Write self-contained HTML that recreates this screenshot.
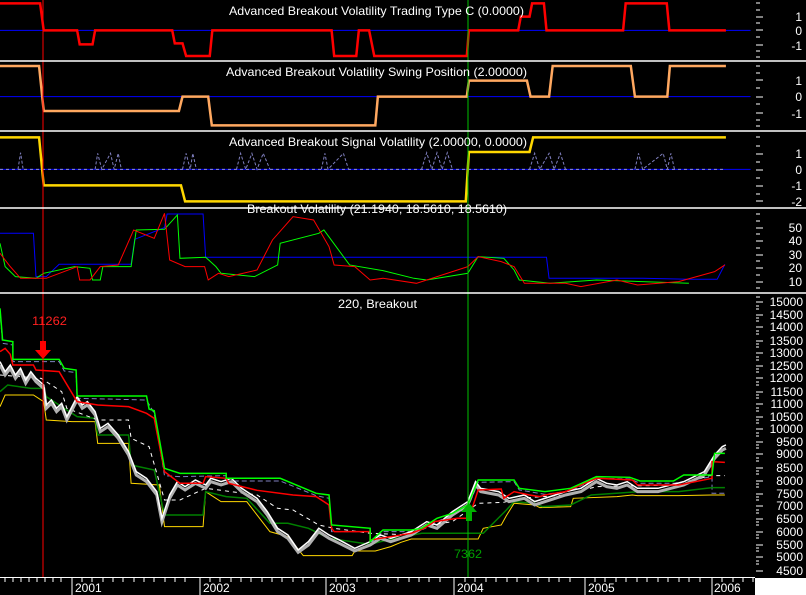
<!DOCTYPE html>
<html><head><meta charset="utf-8"><style>
html,body{margin:0;padding:0;background:#000;}
svg{display:block}
text{font-family:"Liberation Sans",sans-serif;fill:#fff;font-size:12px}
.r{text-anchor:end}
path,polyline{fill:none;vector-effect:non-scaling-stroke}
</style></head><body>
<svg width="806" height="595" viewBox="0 0 806 595" xmlns="http://www.w3.org/2000/svg">
<rect width="806" height="595" fill="#000"/>
<g transform="scale(0.5141,0.3333)">
 <path d="M0,91H1460" stroke="#0000ff" stroke-width="1"/>
 <path d="M0,290H1460" stroke="#0000ff" stroke-width="1"/>
 <path d="M0,508H1460" stroke="#0000ff" stroke-width="1"/>
 <path d="M0,508H1412" stroke="#9090d0" stroke-width="1" stroke-dasharray="3,3"/>
 <g stroke="#8080c0" stroke-width="1" stroke-dasharray="3,2">
  <polyline points="35,508 40,458 45,508"/>
  <polyline points="185,508 190,460 198,508 215,460 222,508 230,460 236,508"/>
  <polyline points="355,508 362,460 370,508 375,460 382,508"/>
  <polyline points="460,508 468,460 478,508 490,460 500,508 512,460 525,508"/>
  <polyline points="625,508 632,460 638,508 668,460 678,508"/>
  <polyline points="820,508 830,458 840,508 850,458 860,508 870,458 880,508"/>
  <polyline points="1030,508 1040,460 1050,508 1068,460 1078,508 1090,460 1100,508"/>
  <polyline points="1235,508 1242,460 1250,508 1290,460 1298,508 1305,460 1312,508"/>
 </g>
 <path d="M0,10H78L85,91H150L155,133H180L185,91H335L340,130H355L362,168H408L413,91H645L650,168H693L698,91H718L728,168H908L912,91H1008L1013,50H1030L1035,10H1058L1063,91H1212L1217,10H1297L1302,91H1412" stroke="#ff0000" stroke-width="2.5"/>
 <path d="M0,198H76L85,333H348L355,290H405L412,376H730L735,290H908L912,242H1025L1032,290H1068L1075,198H1227L1235,290H1298L1303,198H1412" stroke="#ffa860" stroke-width="2.5"/>
 <path d="M0,412H76L85,556H352L360,604H906L912,456H1030L1037,412H1412" stroke="#ffd700" stroke-width="2.5"/>
 <polyline stroke="#0000ff" stroke-width="1" points="0,700 65,700 70,830 90,830 115,793 255,793 262,718 320,683 325,642 395,642 400,772 1063,772 1068,835 1250,835 1340,838 1395,838 1410,793"/>
 <polyline stroke="#00ff00" stroke-width="1" points="0,730 10,800 30,830 70,835 85,820 145,800 175,805 180,840 195,840 200,800 255,800 265,690 320,688 345,645 350,775 400,772 420,800 430,820 495,830 540,795 545,730 620,700 630,690 680,795 745,812 805,835 830,840 910,820 930,770 980,775 1000,810 1010,840 1070,850 1160,840 1340,850"/>
 <polyline stroke="#ff0000" stroke-width="1" points="0,760 20,800 40,835 90,835 150,800 155,840 175,840 195,800 230,795 260,690 300,715 320,640 330,780 360,800 398,800 405,840 425,820 445,830 500,810 530,720 570,650 610,660 640,740 650,795 690,800 720,840 745,835 810,850 880,815 910,800 930,770 975,785 1000,800 1020,850 1100,850 1130,860 1200,840 1240,855 1320,845 1390,815 1410,795"/>
</g>
<g transform="translate(0,265) scale(0.5141,0.3333)">
 <polyline stroke="#8080c0" stroke-width="1" stroke-dasharray="5,3" points="0,140 5,235 25,240 25,290 115,290 125,318 148,323 150,400 285,405 300,445 320,632 350,635 440,632 440,648 545,648 615,692 640,700 645,800 720,800 720,835 745,800 800,800 850,770 910,728 930,652 1000,650 1010,675 1060,688 1110,678 1160,640 1225,642 1245,655 1310,655 1385,635 1385,685 1410,685"/>
 <polyline stroke="#ffd700" stroke-width="1" points="0,425 10,390 65,390 85,410 90,465 140,470 185,470 190,535 250,535 255,655 310,660 320,785 395,785 400,680 430,710 480,710 525,800 560,815 590,872 685,872 690,858 730,858 760,845 780,832 800,822 930,822 940,790 975,780 985,752 1000,715 1040,720 1050,728 1110,725 1115,700 1200,695 1230,690 1240,692 1320,692 1385,690 1410,690"/>
 <polyline stroke="#008000" stroke-width="1.5" points="0,380 15,360 60,370 85,370 90,395 150,455 185,460 190,510 250,510 255,600 300,615 320,750 395,750 400,680 440,695 480,700 525,775 560,775 600,790 640,820 720,838 740,830 820,805 940,805 985,735 1000,710 1040,715 1055,725 1110,720 1150,690 1245,680 1320,680 1385,668 1410,668"/>
 <polyline stroke="#ffffff" stroke-width="1" stroke-dasharray="4,4" points="0,330 80,340 120,380 130,430 190,465 250,465 255,520 290,545 320,705 350,705 400,670 500,690 540,730 570,735 620,780 650,790 720,805 800,810 840,780 880,770 930,715 980,712 1010,700 1100,690 1160,665 1320,660 1380,632 1410,632"/>
 <polyline stroke="#b0b0b0" stroke-width="3" points="0,300 10,330 20,310 30,340 40,320 50,355 60,330 70,350 85,370 90,430 100,415 110,440 120,425 130,465 150,405 160,430 170,420 185,450 195,500 210,485 230,520 250,570 265,630 285,650 305,690 315,770 330,700 345,660 360,675 380,655 400,670 410,650 430,660 450,650 470,680 500,710 520,750 540,800 560,820 580,862 600,840 620,800 640,820 660,835 690,858 720,840 740,820 760,830 800,810 830,780 850,790 880,750 910,720 925,660 935,680 970,690 990,710 1020,700 1040,720 1080,700 1100,690 1130,680 1160,650 1180,665 1200,670 1220,660 1240,680 1280,680 1330,660 1370,630 1390,580 1405,555 1412,550"/>
 <polyline stroke="#ffffff" stroke-width="1.5" points="0,290 10,320 20,300 30,330 40,310 50,345 60,320 70,340 85,360 90,420 100,405 110,430 120,415 130,455 150,395 160,420 170,410 185,440 195,490 210,475 230,510 250,560 265,620 285,640 305,680 315,760 330,690 345,650 360,665 380,645 400,660 410,640 430,650 450,640 470,670 500,700 520,740 540,790 560,810 580,855 600,830 620,790 640,810 660,825 690,850 720,830 740,810 760,820 800,800 830,770 850,780 880,740 910,710 925,650 935,670 970,680 990,700 1020,690 1040,710 1080,690 1100,680 1130,670 1160,640 1180,655 1200,660 1220,650 1240,670 1280,670 1330,650 1370,620 1390,570 1405,545 1412,540"/>
 <polyline stroke="#ff0000" stroke-width="1.5" points="0,260 10,250 20,268 25,300 65,300 70,315 115,320 150,410 190,420 250,425 285,445 300,460 320,620 350,655 395,655 400,635 440,640 445,655 500,676 570,690 615,695 640,720 645,790 650,800 720,800 720,825 740,820 800,805 825,790 845,770 890,760 912,760 930,675 975,672 980,700 1000,680 1030,690 1050,695 1060,690 1100,680 1160,640 1230,645 1240,660 1320,660 1385,640 1385,590 1410,592"/>
 <polyline stroke="#00ff00" stroke-width="1.5" points="0,130 5,225 25,230 25,283 115,283 125,310 148,315 150,393 285,393 290,432 300,437 320,610 350,625 440,625 440,640 545,640 615,685 640,690 645,780 720,790 720,830 745,795 800,795 820,790 850,760 880,745 910,720 930,645 1000,645 1010,670 1060,680 1110,670 1160,635 1225,637 1245,648 1310,648 1330,630 1385,630 1390,565 1410,565"/>
</g>
<path d="M43,0V577" stroke="#ff0000" stroke-width="1"/>
<path d="M468,0V577" stroke="#00c000" stroke-width="1"/>
<polygon points="40,341 46,341 46,350 51,350 43,359 35,350 40,350" fill="#ff0000"/>
<polygon points="466,521 472,521 472,512 477,512 469,503 461,512 466,512" fill="#00b000"/>
<text x="32" y="325" style="fill:#ff2020" textLength="35" lengthAdjust="spacingAndGlyphs">11262</text>
<text x="454" y="558" style="fill:#00a000" textLength="28" lengthAdjust="spacingAndGlyphs">7362</text>
<g stroke="#fff" stroke-width="1.5">
 <path d="M0,61H806M0,131H806M0,208H806M0,293H806"/>
 <path d="M0,577.5H755" stroke-width="1"/>
</g>
<rect x="755" y="578" width="51" height="17" fill="#fff"/>
<text x="229" y="15" textLength="295" lengthAdjust="spacingAndGlyphs">Advanced Breakout Volatility Trading Type C (0.0000)</text>
<text x="226" y="76" textLength="301" lengthAdjust="spacingAndGlyphs">Advanced Breakout Volatility Swing Position (2.00000)</text>
<text x="229" y="146" textLength="298" lengthAdjust="spacingAndGlyphs">Advanced Breakout Signal Volatility (2.00000, 0.0000)</text>
<text x="247" y="213" textLength="260" lengthAdjust="spacingAndGlyphs">Breakout Volatility (21.1940, 18.5610, 18.5610)</text>
<text x="338" y="308" textLength="79" lengthAdjust="spacingAndGlyphs">220, Breakout</text>
<g stroke="#fff" stroke-width="1">
 <path d="M756,3h4M756,10h4M756,17h7M756,23h4M756,30h7M756,37h4M756,45h7M756,51h4M756,57h4"/>
 <path d="M756,66h4M756,73h4M756,80h7M756,88h4M756,97h7M756,104h4M756,113h7M756,120h4M756,126h4"/>
 <path d="M756,137h4M756,146h4M756,154h7M756,162h4M756,170h7M756,178h4M756,186h7M756,194h4M756,201h7"/>
 <path d="M756,214h4M756,221h4M756,228h7M756,234h4M756,241h7M756,248h4M756,255h7M756,261h4M756,268h7M756,275h4M756,282h7M756,288h4"/>
 <path d="M756,297h4M756,302h7M756,306h3M756,309h3M756,315h7M756,318h3M756,321h3M756,327h7M756,331h3M756,334h3M756,341h7M756,344h3M756,347h3M756,353h7M756,357h3M756,360h3M756,366h7M756,369h3M756,372h3M756,378h7M756,382h3M756,385h3M756,392h7M756,395h3M756,398h3M756,404h7M756,408h3M756,411h3M756,417h7M756,420h3M756,423h3M756,429h7M756,433h3M756,436h3M756,442h7M756,445h3M756,448h3M756,454h7M756,458h3M756,461h3M756,468h7M756,471h3M756,474h3M756,481h7M756,484h3M756,487h3M756,494h7M756,497h3M756,500h3M756,506h7M756,510h3M756,513h3M756,519h7M756,522h3M756,525h3M756,532h7M756,535h3M756,538h3M756,545h7M756,548h3M756,551h3M756,557h7M756,561h3M756,564h3M756,571h7"/>
</g>
<text x="802" y="21" class="r">1</text><text x="802" y="35" class="r">0</text><text x="802" y="50" class="r">-1</text>
<text x="802" y="85" class="r">1</text><text x="802" y="101" class="r">0</text><text x="802" y="118" class="r">-1</text>
<text x="802" y="158" class="r">1</text><text x="802" y="174" class="r">0</text><text x="802" y="190" class="r">-1</text><text x="802" y="206" class="r">-2</text>
<text x="802" y="232" class="r">50</text><text x="802" y="245" class="r">40</text><text x="802" y="259" class="r">30</text><text x="802" y="272" class="r">20</text><text x="802" y="286" class="r">10</text>
<text x="803" y="306" class="r">15000</text><text x="803" y="319" class="r">14500</text><text x="803" y="331" class="r">14000</text><text x="803" y="345" class="r">13500</text><text x="803" y="357" class="r">13000</text><text x="803" y="370" class="r">12500</text><text x="803" y="382" class="r">12000</text><text x="803" y="396" class="r">11500</text><text x="803" y="408" class="r">11000</text><text x="803" y="421" class="r">10500</text><text x="803" y="433" class="r">10000</text><text x="803" y="446" class="r">9500</text><text x="803" y="458" class="r">9000</text><text x="803" y="472" class="r">8500</text><text x="803" y="485" class="r">8000</text><text x="803" y="498" class="r">7500</text><text x="803" y="510" class="r">7000</text><text x="803" y="523" class="r">6500</text><text x="803" y="536" class="r">6000</text><text x="803" y="549" class="r">5500</text><text x="803" y="561" class="r">5000</text><text x="803" y="575" class="r">4500</text>
<g stroke="#fff" stroke-width="1">
 <path d="M5,578v4M13,578v4M21,578v4M29,578v4M37,578v4M45,578v4M53,578v4M61,578v4M72,578v17M82,578v4M92,578v4M103,578v4M113,578v4M123,578v4M134,578v4M144,578v4M154,578v4M165,578v4M175,578v4M185,578v4M200,578v17M210,578v4M220,578v4M231,578v4M241,578v4M251,578v4M262,578v4M272,578v4M282,578v4M293,578v4M303,578v4M313,578v4M326,578v17M336,578v4M347,578v4M357,578v4M367,578v4M378,578v4M388,578v4M398,578v4M409,578v4M419,578v4M429,578v4M440,578v4M454,578v17M465,578v4M475,578v4M486,578v4M496,578v4M507,578v4M517,578v4M528,578v4M538,578v4M549,578v4M559,578v4M570,578v4M585,578v17M595,578v4M605,578v4M616,578v4M626,578v4M637,578v4M647,578v4M658,578v4M668,578v4M679,578v4M689,578v4M700,578v4M712,578v17M722,578v4M733,578v4M743,578v4M753,578v4"/>
</g>
<text x="75" y="592">2001</text><text x="203" y="592">2002</text><text x="329" y="592">2003</text><text x="457" y="592">2004</text><text x="588" y="592">2005</text><text x="714" y="592">2006</text>
</svg>
</body></html>
